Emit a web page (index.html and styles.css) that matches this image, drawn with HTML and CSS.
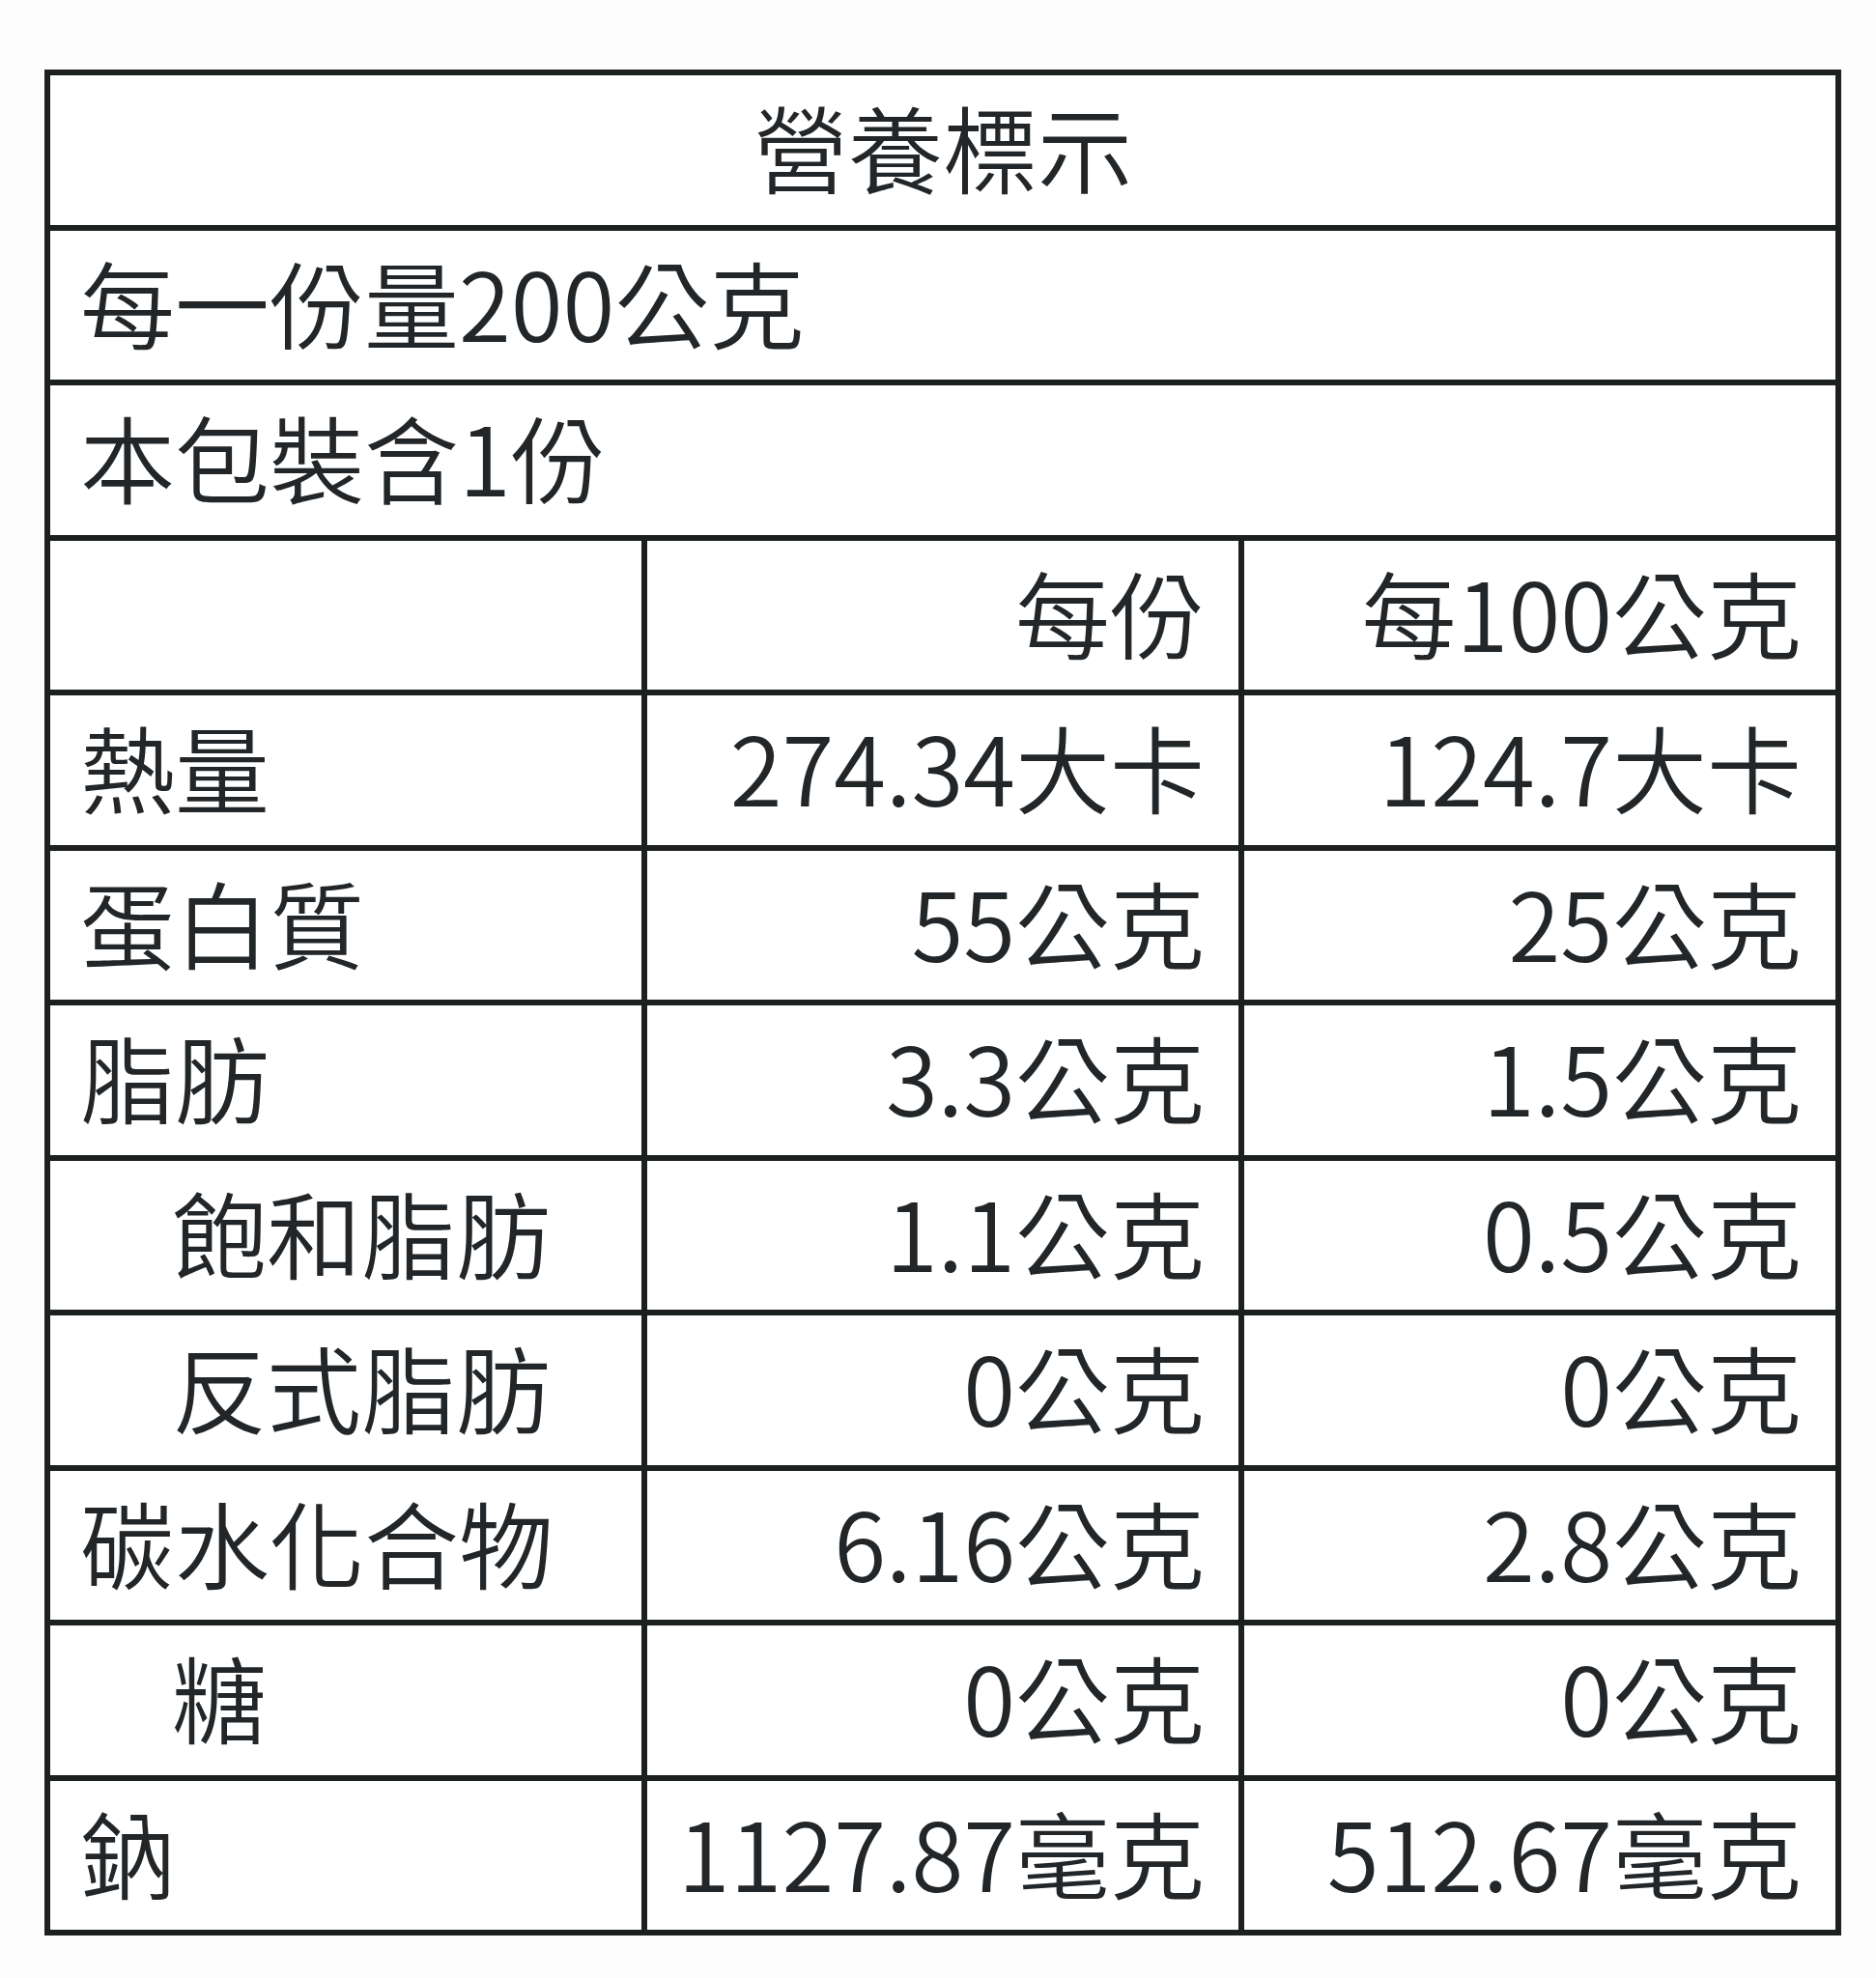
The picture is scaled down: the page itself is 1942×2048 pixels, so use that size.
FILE: index.html
```html
<!DOCTYPE html>
<html lang="zh-Hant">
<head>
<meta charset="utf-8">
<title>營養標示</title>
<link rel="stylesheet" href="styles.css">
</head>
<body>
<table class="nutrition">
  <tbody>
    <tr><td class="title" colspan="3">營養標示</td></tr>
    <tr><td class="full" colspan="3">每一份量200公克</td></tr>
    <tr><td class="full" colspan="3">本包裝含1份</td></tr>
    <tr><td></td><td class="num">每份</td><td class="num">每100公克</td></tr>
    <tr><td>熱量</td><td class="num">274.34大卡</td><td class="num">124.7大卡</td></tr>
    <tr><td>蛋白質</td><td class="num">55公克</td><td class="num">25公克</td></tr>
    <tr><td>脂肪</td><td class="num">3.3公克</td><td class="num">1.5公克</td></tr>
    <tr><td class="indent">飽和脂肪</td><td class="num">1.1公克</td><td class="num">0.5公克</td></tr>
    <tr><td class="indent">反式脂肪</td><td class="num">0公克</td><td class="num">0公克</td></tr>
    <tr><td>碳水化合物</td><td class="num">6.16公克</td><td class="num">2.8公克</td></tr>
    <tr><td class="indent">糖</td><td class="num">0公克</td><td class="num">0公克</td></tr>
    <tr><td>鈉</td><td class="num">1127.87毫克</td><td class="num">512.67毫克</td></tr>
  </tbody>
</table>
</body>
</html>
```
FILE: styles.css
```css
html, body {
  margin: 0;
  padding: 0;
  background: #fdfdfd;
}

body {
  padding: 72px 0 0 46px;
  font-family: "Noto Sans CJK TC", "Noto Sans CJK SC", sans-serif;
  color: #222629;
}

.nutrition {
  box-sizing: border-box;
  width: 1860px;
  table-layout: fixed;
  border-collapse: separate;
  border-spacing: 0;
  border-left: 6px solid #1c2120;
  border-top: 6px solid #1c2120;
  background: #ffffff;
}

.nutrition td {
  box-sizing: border-box;
  height: 160.5px;
  padding: 0 35px 10px 31px;
  border-right: 6px solid #1c2120;
  border-bottom: 6px solid #1c2120;
  font-size: 98px;
  font-weight: 350;
  line-height: 1;
  vertical-align: middle;
  white-space: nowrap;
  text-align: left;
}

.nutrition td.title {
  text-align: center;
  padding-left: 0;
  padding-right: 0;
}

.nutrition td.num {
  text-align: right;
}

.nutrition td.indent {
  padding-left: 126px;
}
```
